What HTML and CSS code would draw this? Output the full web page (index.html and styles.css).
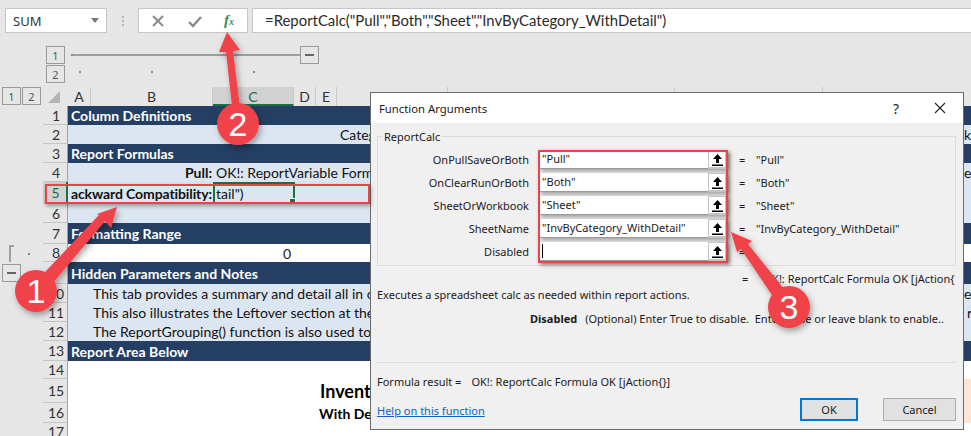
FILE: index.html
```html
<!DOCTYPE html>
<html lang="en">
<head>
<meta charset="utf-8">
<title>Function Arguments</title>
<link rel="stylesheet" href="styles.css">
</head>
<body>
<div class="app">
  <div class="fbar">
    <div class="namebox"><span>SUM</span><svg class="caret" width="8" height="5" viewBox="0 0 8 5"><path d="M0 0h8L4 5z" fill="#777"/></svg></div>
    <div class="grip"><i></i><i></i><i></i></div>
    <div class="fxgroup">
      <svg width="14" height="14" viewBox="0 0 14 14"><path d="M2 2l10 10M12 2L2 12" stroke="#8a8a8a" stroke-width="2" fill="none"/></svg>
      <svg width="14" height="14" viewBox="0 0 14 14"><path d="M1 8l4 4 8-9" stroke="#8a8a8a" stroke-width="2.4" fill="none"/></svg>
      <span class="fx">f<small>x</small></span>
    </div>
    <div class="formula">=ReportCalc("Pull","Both","Sheet","InvByCategory_WithDetail")</div>
  </div>

  <div class="outline-top">
    <div class="levels">
      <div class="obtn">1</div>
      <div class="obtn">2</div>
    </div>
    <div class="otrack">
      <div class="oline-row"><div class="oline"></div><div class="obtn minus"><b></b></div></div>
      <div class="odots"><i class="d1"></i><i class="d2"></i><i class="d3"></i></div>
    </div>
  </div>

  <div class="sheet">
    <div class="gutter">
      <div class="glevels"><div class="obtn gb">1</div><div class="obtn gb">2</div></div>
      <div class="bracket-wrap"><div class="bracket"></div><i class="gdot"></i></div>
      <div class="obtn gb minus"><b></b></div>
    </div>
    <div class="grid">
      <div class="colhead">
        <div class="corner"><svg width="12" height="12" viewBox="0 0 12 12"><path d="M12 0v12H0z" fill="#b5b5b5"/></svg></div>
        <div class="ch a">A</div><div class="ch b">B</div><div class="ch c sel">C</div><div class="ch d">D</div><div class="ch e">E</div><div class="ch f"></div><div class="ch g"></div><div class="ch h"></div><div class="ch i"></div>
      </div>
      <div class="row h19 band"><div class="rh">1</div><div class="cell pad">Column Definitions</div></div>
      <div class="row h19 light"><div class="rh">2</div><div class="cell cat">Category</div><div class="edge">k</div></div>
      <div class="row h19 band"><div class="rh">3</div><div class="cell pad">Report Formulas</div></div>
      <div class="row h19 light"><div class="rh">4</div><div class="lbl">Pull:</div><div class="cell val">OK!: ReportVariable Formula OK</div><div class="edge">e</div></div>
      <div class="row h22 light"><div class="rh rsel">5</div><div class="lbl tight">ackward Compatibility:</div><div class="cell val">tail")</div><div class="selbox"></div></div>
      <div class="row h19 light"><div class="rh">6</div></div>
      <div class="row h21 band"><div class="rh">7</div><div class="cell pad">Formatting Range</div></div>
      <div class="row h18 white"><div class="rh">8</div><div class="cell zero">0</div></div>
      <div class="row h22 band"><div class="rh">9</div><div class="cell pad">Hidden Parameters and Notes</div></div>
      <div class="row h19 light"><div class="rh">10</div><div class="cell note">This tab provides a summary and detail all in one</div><div class="edge">e</div></div>
      <div class="row h19 light"><div class="rh">11</div><div class="cell note">This also illustrates the Leftover section at the</div><div class="edge edge-r">r</div></div>
      <div class="row h19 light"><div class="rh">12</div><div class="cell note">The ReportGrouping() function is also used to</div></div>
      <div class="row h20 band"><div class="rh">13</div><div class="cell pad">Report Area Below</div></div>
      <div class="row h18 white"><div class="rh">14</div></div>
      <div class="row h24 white"><div class="rh">15</div><div class="cell title">Inventory</div><div class="edge peach"></div></div>
      <div class="row h20 white"><div class="rh">16</div><div class="cell sub">With Detail</div><div class="edge peach"></div></div>
      <div class="row h18 white"><div class="rh">17</div></div>
    </div>
  </div>

  <section class="dialog">
    <header class="dtitle">
      <span>Function Arguments</span>
      <span class="dctrl"><span class="q">?</span>
        <svg width="14" height="14" viewBox="0 0 14 14"><path d="M2 2l10 10M12 2L2 12" stroke="#222" stroke-width="1.1" fill="none"/></svg></span>
    </header>
    <div class="dbody">
      <div class="group">
        <div class="legend">ReportCalc</div>
        <div class="arg"><label>OnPullSaveOrBoth</label><div class="field"><div class="input">"Pull"</div><div class="up"><svg width="11" height="13" viewBox="0 0 11 13"><path d="M5.5 1L10 6H7v4H4V6H1zM0 11.5h11V13H0z" fill="#000"/></svg></div></div><span class="eq">=</span><span class="res">"Pull"</span></div>
        <div class="arg"><label>OnClearRunOrBoth</label><div class="field"><div class="input">"Both"</div><div class="up"><svg width="11" height="13" viewBox="0 0 11 13"><path d="M5.5 1L10 6H7v4H4V6H1zM0 11.5h11V13H0z" fill="#000"/></svg></div></div><span class="eq">=</span><span class="res">"Both"</span></div>
        <div class="arg"><label>SheetOrWorkbook</label><div class="field"><div class="input">"Sheet"</div><div class="up"><svg width="11" height="13" viewBox="0 0 11 13"><path d="M5.5 1L10 6H7v4H4V6H1zM0 11.5h11V13H0z" fill="#000"/></svg></div></div><span class="eq">=</span><span class="res">"Sheet"</span></div>
        <div class="arg"><label>SheetName</label><div class="field"><div class="input">"InvByCategory_WithDetail"</div><div class="up"><svg width="11" height="13" viewBox="0 0 11 13"><path d="M5.5 1L10 6H7v4H4V6H1zM0 11.5h11V13H0z" fill="#000"/></svg></div></div><span class="eq">=</span><span class="res">"InvByCategory_WithDetail"</span></div>
        <div class="arg"><label>Disabled</label><div class="field"><div class="input"><i class="cursor"></i></div><div class="up"><svg width="11" height="13" viewBox="0 0 11 13"><path d="M5.5 1L10 6H7v4H4V6H1zM0 11.5h11V13H0z" fill="#000"/></svg></div></div><span class="eq">=</span></div>
      </div>
      <div class="result"><span class="eq">=</span><span class="res">"OK!: ReportCalc Formula OK [jAction{</span></div>
      <p class="desc">Executes a spreadsheet calc as needed within report actions.</p>
      <p class="help"><b>Disabled</b><span>(Optional) Enter True to disable.&nbsp; Enter False or leave blank to enable..</span></p>
      <div class="sep"></div>
      <p class="fres"><span>Formula result =</span><span>OK!: ReportCalc Formula OK [jAction{}]</span></p>
      <div class="dfoot">
        <a class="link">Help on this function</a>
        <div class="btns"><div class="btn ok">OK</div><div class="btn">Cancel</div></div>
      </div>
    </div>
  </section>

  <div class="redbox rb-row"></div>
  <div class="redbox rb-args"></div>

  <svg class="marks" width="971" height="436" viewBox="0 0 971 436">
    <defs>
      <filter id="sh" x="-30%" y="-30%" width="160%" height="160%"><feDropShadow dx="2" dy="3" stdDeviation="3" flood-color="#000" flood-opacity=".35"/></filter>
    </defs>
    <g filter="url(#sh)" fill="#f0424a">
      <path d="M117 207L111 228L105 221L42 296L30 288L99 215L97 214z"/>
      <circle cx="36" cy="291" r="21"/>
    </g>
    <g filter="url(#sh)" fill="#f0424a">
      <path d="M227 32L240 50L233 51L242 124L234 124L226 52L219 52z"/>
      <circle cx="238" cy="124" r="21"/>
    </g>
    <g filter="url(#sh)" fill="#f0424a">
      <path d="M731 232L752 241L748 244L796 304L782 310L741 249L737 252z"/>
      <circle cx="789" cy="307" r="21"/>
    </g>
    <text x="36" y="303" class="num">1</text>
    <text x="238" y="136" class="num">2</text>
    <text x="789" y="319" class="num">3</text>
  </svg>
</div>
</body>
</html>
```
FILE: styles.css
```css
*{box-sizing:border-box}
html,body{margin:0;padding:0}
body{width:971px;height:436px;overflow:hidden;background:#e6e6e6}
.app{position:relative;width:971px;height:436px;overflow:hidden;padding-top:8px;background:#e6e6e6;font-family:"Lato","Liberation Sans",sans-serif;color:#111}

.fbar{display:flex;align-items:stretch;height:25px;padding-left:5px}
.namebox{width:102px;background:#fff;border:1px solid #c6c6c6;display:flex;align-items:center;justify-content:space-between;padding:0 7px;font:13px "Noto Sans",sans-serif;color:#333}
.grip{width:31px;display:flex;flex-direction:column;align-items:center;justify-content:center;gap:2px}
.grip i{width:2px;height:2px;background:#b5b5b5}
.fxgroup{width:110px;background:#fff;border:1px solid #c6c6c6;display:flex;align-items:center;justify-content:space-between;padding:0 11px 0 12px}
.fx{font:italic 700 15px "Liberation Serif",serif;color:#3d8a5c;padding-right:2px}
.fx small{font-size:10px}
.formula{flex:1;margin-left:4px;background:#fff;border-top:1px solid #c6c6c6;border-bottom:1px solid #c6c6c6;border-left:1px solid #c6c6c6;padding-left:12px;line-height:23px;font-size:14.9px;color:#2a2a2a;white-space:nowrap}

.outline-top{display:flex;padding:13px 0 0 46px;height:54px}
.levels{display:flex;flex-direction:column;gap:1px}
.obtn{width:19px;height:18px;border:1px solid #9a9a9a;background:#e6e6e6;display:flex;align-items:center;justify-content:center;font:11px "Noto Sans",sans-serif;color:#555}
.minus b{display:block;width:9px;height:2px;background:#666}
.otrack{width:248px;margin-left:6px}
.oline-row{display:flex;align-items:center;height:18px}
.oline{flex:1;height:2px;background:#9e9e9e;border-left:2px solid #8d8d8d}
.odots{position:relative;height:19px}
.odots i{position:absolute;top:7px;width:2px;height:2px;background:#888}
.d1{left:8px}.d2{left:80px}.d3{left:182px}

.sheet{display:flex}
.gutter{width:43px;padding-left:2px;display:flex;flex-direction:column}
.glevels{display:flex;gap:1px;height:158px}
.gb{width:19px}
.bracket-wrap{position:relative;height:19px}
.bracket{position:absolute;left:7px;top:0;width:5px;height:17px;border-left:2px solid #9e9e9e;border-top:2px solid #9e9e9e}
.gdot{position:absolute;left:26px;top:8px;width:2px;height:2px;background:#888}

.grid{flex:1;min-width:0}
.colhead{display:flex;height:19px;font-size:14px;color:#333}
.corner{width:25px;background:#e6e6e6;display:flex;align-items:flex-end;justify-content:center;padding-right:3px;padding-bottom:3px}
.ch{height:100%;text-align:center;border-right:1px solid #c8c8c8;line-height:19px;background:#e6e6e6}
.ch.a{width:23px}.ch.b{width:122px}.ch.c{width:81px}.ch.d{width:22px}.ch.e{width:21px}.ch.f{width:111px}.ch.g{width:227px}.ch.h{width:148px}.ch.i{flex:1;border:0}
.ch.sel{background:#d2d2d2;color:#1f6b3f;border-bottom:2px solid #1f6e43}

.row{position:relative;display:flex;align-items:center;font-size:14px;white-space:nowrap}
.h18{height:18px}.h19{height:19px}.h20{height:20px}.h21{height:21px}.h22{height:22px}.h24{height:24px}
.band{background:#243f63;color:#fff;font-weight:700}
.light{background:#dce6f1}
.white{background:#fff}
.rh{width:25px;height:100%;flex:none;background:#e6e6e6;color:#333;font-weight:400;border-bottom:1px solid #c4c4c4;border-right:1px solid #9f9f9f;display:flex;align-items:center;justify-content:center;padding-left:2px;font-size:14px}
.rsel{background:#d2d2d2;color:#1f6b3f;border-right:2px solid #1f6e43}
.cell{flex:none}
.pad{padding-left:3px}
.cat{margin-left:272px}
.lbl{width:145px;flex:none;text-align:right;font-weight:700;padding-right:1px}
.tight{letter-spacing:-.1px}
.val{padding-left:3px}
.selbox{position:absolute;left:170px;top:0;width:82px;height:22px;border:2px solid #1f6e43}
.selbox::after{content:"";position:absolute;right:-3px;bottom:-3px;width:5px;height:5px;background:#1f6e43;border:1px solid #fff}
.zero{margin-left:215px;color:#222}
.note{padding-left:25px}
.title{margin-left:252px;font-size:18px;font-weight:700;color:#000}
.sub{margin-left:251px;font-size:14px;font-weight:700;color:#000}
.edge{position:absolute;left:921px;top:0;height:100%;width:10px;display:flex;align-items:center}
.edge-r{padding-left:3px}
.peach{background:#fce4d6}

.dialog{position:absolute;left:370px;top:92px;width:594px;height:338px;background:#f0f0f0;border:1px solid #6a6a6a;font-family:"Noto Sans",sans-serif;font-size:11px;color:#1a1a1a;display:flex;flex-direction:column}
.dtitle{height:30px;flex:none;background:#fff;display:flex;justify-content:space-between;align-items:center;padding:0 16px 0 8px;font-size:11.3px}
.dctrl{display:flex;align-items:center;gap:34px;font-size:14px}
.dbody{flex:1;padding:13px 7px 0 6px;display:flex;flex-direction:column}
.group{position:relative;border:1px solid #dcdcdc;height:130px;padding-top:13px;display:flex;flex-direction:column;gap:4px}
.legend{position:absolute;left:5px;top:-8px;padding:0 1px;background:#f0f0f0;line-height:16px}
.arg{display:flex;align-items:center;height:19px}
.arg label{width:151px;text-align:right;flex:none}
.field{margin-left:10px;display:flex;width:188px;height:19px;flex:none;box-shadow:2px 2px 4px rgba(0,0,0,.35)}
.input{flex:1;background:#fff;border-bottom:1px solid #9a9a9a;padding-left:3px;line-height:18px;display:flex;align-items:center}
.cursor{width:1px;height:14px;background:#000}
.up{width:19px;background:#fff;border:2px solid #c4c4c4;border-width:1px 2px 2px 1px;display:flex;align-items:center;justify-content:center}
.eq{width:17px;flex:none;margin-left:12px}
.res{flex:none}
.result{display:flex;position:absolute;left:359px;top:177px;height:16px;align-items:center}
.desc{margin:21px 0 0;line-height:16px}
.help{margin:8px 0 0 153px;display:flex;gap:8px;line-height:16px;white-space:nowrap}
.sep{height:1px;background:#dcdcdc;margin-top:35px}
.fres{margin:11px 0 0;display:flex;gap:10px;line-height:16px}
.dfoot{display:flex;justify-content:space-between;align-items:flex-start;margin-top:8px}
.link{color:#0b66c3;text-decoration:underline;margin-top:5px}
.btns{display:flex;gap:25px}
.btn{width:73px;height:23px;background:#e1e1e1;border:1px solid #adadad;display:flex;align-items:center;justify-content:center}
.btn.ok{width:58px;border:2px solid #0078d7}

.redbox{position:absolute;border:2px solid #ef4149;pointer-events:none}
.rb-row{left:45px;top:184px;width:325px;height:20px;box-shadow:1px 2px 4px rgba(0,0,0,.35)}
.rb-args{left:538px;top:150px;width:190px;height:113px;box-shadow:2px 2px 4px rgba(0,0,0,.35)}
.marks{position:absolute;left:0;top:0;pointer-events:none}
.num{font:34px "Liberation Sans",sans-serif;fill:#fff;text-anchor:middle}
```
